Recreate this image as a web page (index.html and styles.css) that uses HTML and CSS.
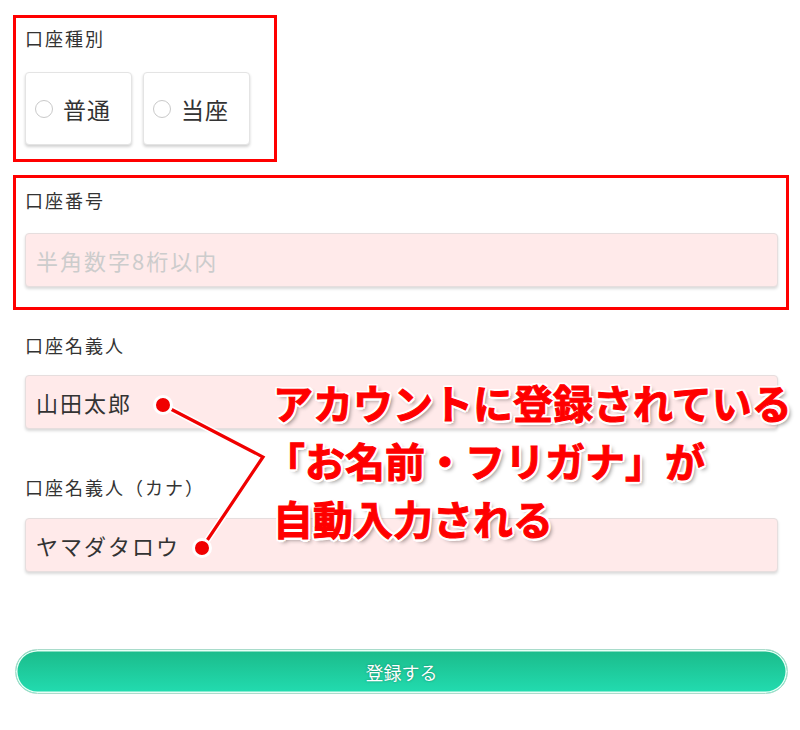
FILE: index.html
```html
<!DOCTYPE html>
<html lang="ja">
<head>
<meta charset="utf-8">
<title>口座登録</title>
<link rel="stylesheet" href="styles.css">
</head>
<body>
<div class="page">
  <section class="group group--type">
    <div class="label">口座種別</div>
    <div class="radios">
      <label class="radio-card"><span class="radio"></span><span class="radio-text">普通</span></label>
      <label class="radio-card"><span class="radio"></span><span class="radio-text">当座</span></label>
    </div>
  </section>

  <section class="group group--number">
    <div class="label">口座番号</div>
    <div class="input input--placeholder">半角数字8桁以内</div>
  </section>

  <section class="group group--holder">
    <div class="label">口座名義人</div>
    <div class="input">山田太郎</div>
  </section>

  <section class="group group--kana">
    <div class="label">口座名義人（カナ）</div>
    <div class="input">ヤマダタロウ</div>
  </section>

  <div class="actions">
    <button class="submit" type="button">登録する</button>
  </div>

  <svg class="callout-lines" width="800" height="730" viewBox="0 0 800 730">
    <path d="M163 405 L263 457 L202 548" fill="none" stroke="#ffffff" stroke-width="6.5" stroke-linejoin="miter"/>
    <path d="M163 405 L263 457 L202 548" fill="none" stroke="#f00000" stroke-width="3.2" stroke-linejoin="miter"/>
    <circle cx="163" cy="405" r="8.5" fill="#f00000" stroke="#ffffff" stroke-width="3"/>
    <circle cx="202" cy="548" r="8.5" fill="#f00000" stroke="#ffffff" stroke-width="3"/>
  </svg>

  <div class="callout-text">
    <div class="callout-line">アカウントに登録されている</div>
    <div class="callout-line callout-line--bracket">「お名前・フリガナ」が</div>
    <div class="callout-line">自動入力される</div>
  </div>
</div>
</body>
</html>
```

FILE: styles.css
```css
* {
  box-sizing: border-box;
}

html, body {
  margin: 0;
  padding: 0;
  background: #ffffff;
}

body {
  font-family: "Noto Sans CJK JP", "Noto Sans", sans-serif;
  color: #333333;
}

.page {
  position: relative;
  width: 800px;
  height: 730px;
  padding: 18px 0 0 16px;
  overflow: hidden;
}

.group {
  width: 770px;
  padding-left: 9px;
  padding-right: 8px;
}

.label {
  font-size: 18px;
  line-height: 27px;
  letter-spacing: 2px;
  color: #333333;
  white-space: nowrap;
}

.group--type {
  width: 258px;
  padding-top: 7px;
  padding-bottom: 14px;
  outline: 3px solid #ff0000;
}

.group--number {
  margin-top: 19px;
  padding-top: 9px;
  padding-bottom: 20px;
  outline: 3px solid #ff0000;
}

.group--number .input {
  margin-top: 19px;
}

.group--holder {
  padding-top: 25px;
}

.group--holder .input {
  margin-top: 16px;
}

.group--kana {
  padding-top: 45px;
}

.group--kana .input {
  margin-top: 17px;
}

.radios {
  display: flex;
  gap: 11px;
  margin-top: 20px;
}

.radio-card {
  display: flex;
  align-items: center;
  width: 107px;
  height: 73px;
  padding-left: 9px;
  background: #ffffff;
  border: 1px solid #e4e4e4;
  border-radius: 4px;
  box-shadow: 0 2px 3px rgba(0, 0, 0, 0.18);
}

.radio {
  flex: none;
  width: 18px;
  height: 18px;
  border: 1px solid #c9c9c9;
  border-radius: 50%;
  background: #ffffff;
  margin-right: 10px;
}

.radio-text {
  font-size: 23px;
  letter-spacing: 1px;
  color: #333333;
}

.input {
  display: flex;
  align-items: center;
  height: 54px;
  padding-left: 10px;
  background: #ffeaea;
  border: 1px solid #e6dede;
  border-radius: 4px;
  box-shadow: 0 2px 3px rgba(0, 0, 0, 0.15);
  font-size: 22px;
  letter-spacing: 2px;
  color: #333333;
}

.input--placeholder {
  color: #cccccc;
}

.actions {
  margin-top: 77px;
  margin-left: -1px;
  width: 773px;
}

.submit {
  display: block;
  width: 100%;
  height: 45px;
  border: 1px solid #a9dccb;
  border-radius: 23px;
  background: linear-gradient(to bottom, #1bbb8a, #22dcb0);
  box-shadow: inset 0 0 0 1.5px #e8fff6;
  font-family: "Noto Sans CJK JP", "Noto Sans", sans-serif;
  font-size: 18px;
  color: #ffffff;
  text-shadow: 0 0 2px rgba(0, 60, 40, 0.5);
  cursor: pointer;
}

.callout-lines {
  position: absolute;
  left: 0;
  top: 0;
}

.callout-text {
  position: absolute;
  left: 273px;
  top: 373px;
  font-size: 40px;
  line-height: 58px;
  font-weight: 700;
  color: #ff0000;
  -webkit-text-stroke: 1px #ff0000;
  white-space: nowrap;
  text-shadow:
    2.5px 0 0 #fff, -2.5px 0 0 #fff, 0 2.5px 0 #fff, 0 -2.5px 0 #fff,
    2px 2px 0 #fff, -2px 2px 0 #fff, 2px -2px 0 #fff, -2px -2px 0 #fff,
    3px 3px 4px rgba(0, 0, 0, 0.45);
}

.callout-line--bracket {
  margin-left: -8px;
}
```
